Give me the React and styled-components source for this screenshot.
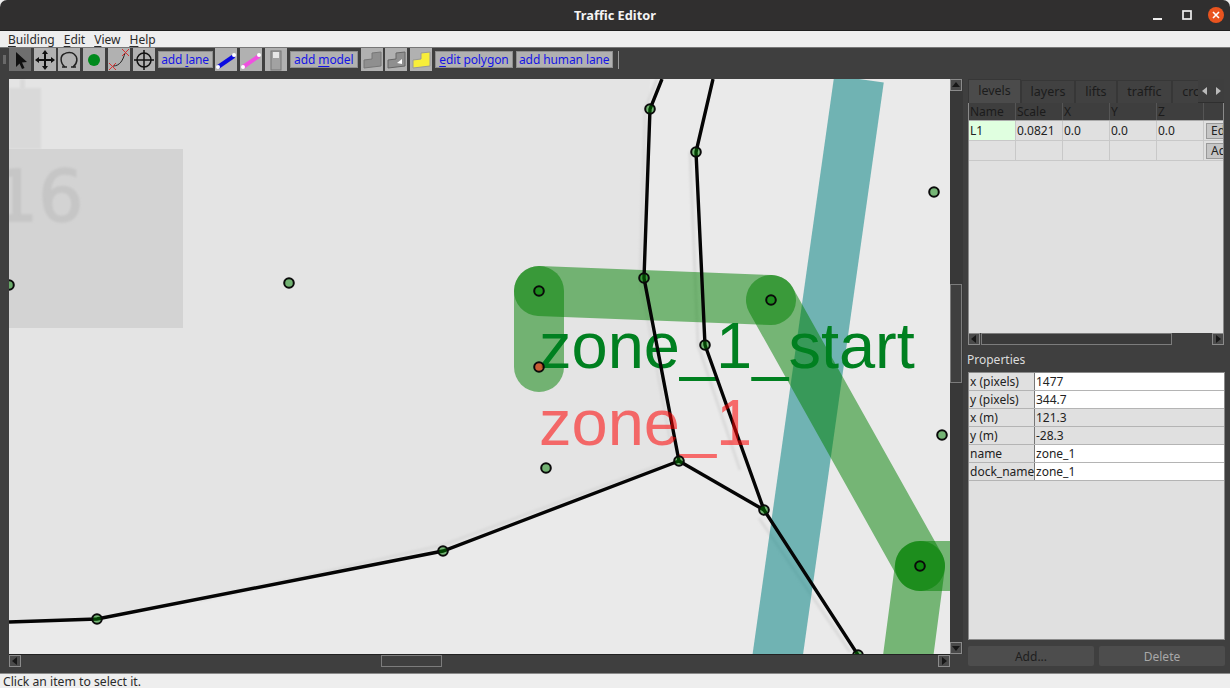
import React from "react";
import styled, { createGlobalStyle } from "styled-components";

const Global = createGlobalStyle`
  html, body { margin: 0; padding: 0; background: #eeeeee; }
  body { width: 1230px; height: 688px; overflow: hidden; font-family: "Noto Sans", "Open Sans", sans-serif; }
  * { box-sizing: border-box; }
`;

const Window = styled.div`
  width: 1230px; height: 688px; display: flex; flex-direction: column; overflow: hidden;
`;
const TitleBar = styled.header`
  height: 31px; flex: none; background: #302f2f; border-bottom: 1px solid #1e1e1e;
  border-radius: 7px 7px 0 0; display: flex; align-items: center; justify-content: center;
  position: relative; color: #f4f4f4; font-size: 12.8px; font-weight: 700;
`;
const WindowButtons = styled.div`
  position: absolute; right: 6px; top: 7px; display: flex; align-items: center; gap: 13px;
`;
const WinIcon = styled.svg`
  width: 16px; height: 16px; display: block;
`;
const MenuBar = styled.nav`
  height: 17px; flex: none; background: #eeeeee; display: flex; align-items: center;
  padding-left: 8px; gap: 9px; font-size: 12px; color: #2a2a2a; border-bottom: 1px solid #777;
`;
const Mnemonic = styled.span`
  text-decoration: underline; text-underline-offset: 2px;
`;
const Toolbar = styled.div`
  height: 31px; flex: none; background: #3f3f3f; display: flex; align-items: flex-start;
  padding: 0 0 0 3px; gap: 2.8px; position: relative;
`;
const Handle = styled.div`
  width: 3px; height: 9px; margin: 7px 0 0 0; background: #6a6a6a; flex: none;
`;
const ToolIcon = styled.button`
  width: 22px; height: 23px; padding: 0; border: 0; border-radius: 0; flex: none;
  background: ${(p) => (p.$active ? "#6f6f6f" : "#b1b1b1")};
  display: flex; align-items: center; justify-content: center;
`;
const ToolText = styled.button`
  height: 17px; margin-top: 3px; padding: 0; border: 1px solid #8f8f8f; border-radius: 0;
  background: #b1b1b1; color: #1414e6; font: 12px "Noto Sans", sans-serif; letter-spacing: -0.1px; line-height: 14px; flex: none;
  width: ${(p) => p.$w}px; white-space: nowrap; text-align: center;
`;
const ToolSep = styled.div`
  width: 1px; height: 18px; margin: 3px 0 0 2px; background: #9a9a9a; flex: none;
`;
const Main = styled.main`
  flex: 1; min-height: 0; background: #3f3f3f; display: flex; padding-left: 9px;
  border-bottom: 1px solid #8a8a8a;
`;
const CanvasGrid = styled.section`
  width: 954px; height: 588px; flex: none; display: grid;
  grid-template-columns: 941px 13px; grid-template-rows: 575px 13px;
`;
const Canvas = styled.svg`
  width: 941px; height: 575px; display: block; background: #e9e9e9;
`;
const VBar = styled.div`
  height: 575px; background: #383838; display: flex; flex-direction: column; justify-content: space-between; position: relative;
`;
const HBar = styled.div`
  width: 941px; background: #3f3f3f; border-top: 1px solid #222; display: flex; justify-content: space-between; position: relative;
`;
const ArrowBtn = styled.div`
  width: 12px; height: 12px; background: #4a4a4a; border: 1px solid #8b8b8b;
  display: flex; align-items: center; justify-content: center; color: #171717; flex: none;
`;
const VThumb = styled.div`
  position: absolute; left: 0; top: 205px; width: 12px; height: 99px; background: #3f3f3f; border: 1px solid #7c7c7c;
`;
const HThumb = styled.div`
  position: absolute; left: 372px; top: 0; width: 61px; height: 12px; background: #3f3f3f; border: 1px solid #7c7c7c;
`;
const Panel = styled.aside`
  width: 257px; margin-left: 5px; flex: none; display: flex; flex-direction: column;
`;
const TabRow = styled.div`
  height: 24px; display: flex; position: relative; overflow: hidden; flex: none; width: 256px;
`;
const Tab = styled.div`
  height: ${(p) => (p.$active ? 24 : 23)}px; margin-top: ${(p) => (p.$active ? 0 : 1)}px;
  width: ${(p) => p.$w}px; flex: none; font-size: 12.5px; color: #1c1c1c; text-align: center; line-height: 22px;
  background: ${(p) => (p.$active ? "#4b4b4b" : "#414141")}; border: 1px solid #373737; border-bottom: 0;
`;
const TabArrows = styled.div`
  position: absolute; right: 0; top: 0; width: 26px; height: 24px; background: #3e3e3e; display: flex;
  align-items: center; justify-content: space-around; color: #bbb; font-size: 8px; border-bottom: 1px solid #2f2f2f;
`;
const TableBox = styled.div`
  width: 256px; height: 230px; background: #e0e0e0; flex: none; overflow: hidden; border-left: 1px solid #8a8a8a; border-right: 1px solid #8a8a8a;
`;
const TableRow = styled.div`
  display: grid; grid-template-columns: 47px 47px 47px 47px 47px 20px; height: ${(p) => p.$h}px;
  ${(p) => (p.$head ? "background:#3e3e3e;border-bottom:1px solid #aaa;" : "")}
`;
const HeadCell = styled.div`
  font-size: 12px; color: #1b1b1b; padding-left: 1px; line-height: 17px; border-right: 1px solid #555; white-space: nowrap;
`;
const Cell = styled.div`
  font-size: 12px; color: #222; padding-left: 1px; line-height: 19px; border-right: 1px solid #c8c8c8; border-bottom: 1px solid #c8c8c8;
  background: ${(p) => (p.$hi ? "#e0ffe0" : "transparent")}; white-space: nowrap;
`;
const CellButton = styled.div`
  width: 30px; height: 16px; margin: 2px 0 0 2px; background: #c6c6c6; border: 1px solid #999; font-size: 12px; color: #222;
  line-height: 14px; padding-left: 4px;
`;
const ButtonCell = styled.div`
  overflow: hidden; border-bottom: 1px solid #c8c8c8;
`;
const PanelHBar = styled.div`
  width: 256px; height: 13px; background: #3f3f3f; display: flex; justify-content: space-between; position: relative; flex: none;
`;
const PanelThumb = styled.div`
  position: absolute; left: 13px; top: 0; width: 191px; height: 12px; background: #3a3a3a; border: 1px solid #7c7c7c;
`;
const PropTitle = styled.div`
  height: 26px; flex: none; font-size: 12px; color: #dcdcdc; line-height: 28px; margin-left: -1px;
`;
const PropBox = styled.div`
  width: 257px; height: 268px; flex: none; background: #e0e0e0; border: 1px solid #8a8a8a;
`;
const PropRow = styled.div`
  display: grid; grid-template-columns: 66px 1fr; height: 18px; border-bottom: 1px solid #b4b4b4;
`;
const PropLabel = styled.div`
  background: #e0e0e0; font-size: 12px; color: #222; line-height: 17px; padding-left: 1px; border-right: 1px solid #777; white-space: nowrap;
`;
const PropValue = styled.div`
  background: ${(p) => (p.$ro ? "#e0e0e0" : "#ffffff")}; font-size: 12px; color: #222; line-height: 17px; padding-left: 1px;
`;
const PropButtons = styled.div`
  display: flex; gap: 5px; margin-top: 6px; width: 257px;
`;
const PanelButton = styled.button`
  flex: 1; height: 20px; padding: 0; border: 0; border-radius: 2px; background: #4d4d4d;
  color: ${(p) => (p.$dim ? "#a8a8a8" : "#1e1e1e")}; font: 12px "Noto Sans", sans-serif;
`;
const StatusBar = styled.footer`
  height: 14px; flex: none; background: #eeeeee; font-size: 12.2px; color: #2a2a2a; padding-left: 3px; line-height: 16px;
  white-space: nowrap; overflow: hidden;
`;

const Tri = ({ d }) => {
  const pts = { u: "1,7 9,7 5,2", d: "1,3 9,3 5,8", l: "7,1 7,9 2,5", r: "3,1 3,9 8,5" }[d];
  return <svg width="10" height="10" viewBox="0 0 10 10"><polygon points={pts} fill="currentColor" /></svg>;
};

const Vertex = ({ x, y, red }) => (
  <circle cx={x} cy={y} r="4.8" fill={red ? "#ff2a10" : "#008000"} fillOpacity={red ? 0.62 : 0.5} stroke="#0a0a0a" strokeWidth="2" />
);

const Ic = styled.svg`
  width: 22px; height: 22px; display: block;
`;

const POLY = "M3 11L11 10L11 4L20 3L20 17L3 19Z";
const greenLanes = ["M539 291L771 300", "M539 291L539 367", "M771 300L920 566", "M920 566L980 566", "M920 566L905 680"];
const freeVerts = [[934,192],[289,283],[9,285],[546,468],[942,435]];
const laneVerts = [[650,109],[696,152],[644,278],[705,345],[679,461],[764,510],[443,551],[97,619],[858,655],[539,291],[771,300],[920,566]];
const propRows = [
  ["x (pixels)", "1477", false], ["y (pixels)", "344.7", false], ["x (m)", "121.3", true],
  ["y (m)", "-28.3", true], ["name", "zone_1", false], ["dock_name", "zone_1", false],
];

export default function App() {
  return (
    <Window>
      <Global />
      <TitleBar>
        Traffic Editor
        <WindowButtons>
          <WinIcon viewBox="0 0 16 16"><rect x="3" y="11" width="9" height="2" fill="#eee" /></WinIcon>
          <WinIcon viewBox="0 0 16 16"><rect x="4" y="4" width="8" height="8" fill="none" stroke="#eee" strokeWidth="1.7" /></WinIcon>
          <WinIcon viewBox="0 0 16 16">
            <circle cx="8" cy="8" r="8" fill="#e9541f" />
            <path d="M5 5l6 6M11 5l-6 6" stroke="#fff" strokeWidth="1.6" />
          </WinIcon>
        </WindowButtons>
      </TitleBar>
      <MenuBar>
        <span><Mnemonic>B</Mnemonic>uilding</span>
        <span><Mnemonic>E</Mnemonic>dit</span>
        <span><Mnemonic>V</Mnemonic>iew</span>
        <span><Mnemonic>H</Mnemonic>elp</span>
      </MenuBar>
      <Toolbar>
        <Handle />
        <ToolIcon $active><Ic viewBox="0 0 22 22"><path d="M7 3L7 18L10.5 14.5L13 20L15.5 19L13 13.5L18 13Z" fill="#111" /></Ic></ToolIcon>
        <ToolIcon><Ic viewBox="0 0 22 22"><path d="M11 1l3 4h-2v5h5V8l4 3-4 3v-2h-5v5h2l-3 4-3-4h2v-5H5v2l-4-3 4-3v2h5V5H8z" fill="#111" /></Ic></ToolIcon>
        <ToolIcon><Ic viewBox="0 0 22 22"><path d="M7 18C2 14 2 7 6 5c3-2 8-2 10 0 4 3 4 9-1 13" fill="none" stroke="#222" strokeWidth="1.5" /><path d="M4 18h5M13 18h5" stroke="#222" strokeWidth="1.5" /></Ic></ToolIcon>
        <ToolIcon><Ic viewBox="0 0 22 22"><circle cx="11" cy="11" r="6" fill="#008a1c" /></Ic></ToolIcon>
        <ToolIcon><Ic viewBox="0 0 22 22"><path d="M5 17C12 17 15 11 17 4" fill="none" stroke="#222" strokeWidth="1" /><path d="M1 14l7 7M8 14l-7 7M14 0l7 7M21 0l-7 7" stroke="#d83030" strokeWidth="1" /></Ic></ToolIcon>
        <ToolIcon><Ic viewBox="0 0 22 22"><circle cx="11" cy="11" r="7" fill="none" stroke="#111" strokeWidth="1.5" /><path d="M11 1v20M1 11h20" stroke="#111" strokeWidth="1.5" /></Ic></ToolIcon>
        <ToolText $w={55}>add <Mnemonic>l</Mnemonic>ane</ToolText>
        <ToolIcon><Ic viewBox="0 0 22 22"><path d="M3 18L19 7" stroke="#0a0ae0" strokeWidth="4" /><circle cx="3" cy="18" r="2" fill="#fff" /><circle cx="19" cy="6" r="2" fill="#fff" /></Ic></ToolIcon>
        <ToolIcon><Ic viewBox="0 0 22 22"><path d="M3 18L19 7" stroke="#f050e0" strokeWidth="4" /><circle cx="3" cy="18" r="2" fill="#fff" /><circle cx="19" cy="6" r="2" fill="#fff" /></Ic></ToolIcon>
        <ToolIcon><Ic viewBox="0 0 22 22"><rect x="6" y="2" width="10" height="19" fill="#a2a2a2" stroke="#777" /><rect x="8" y="3" width="6" height="6" fill="#e8e8e8" /></Ic></ToolIcon>
        <ToolText $w={68}>add <Mnemonic>m</Mnemonic>odel</ToolText>
        <ToolIcon><Ic viewBox="0 0 22 22"><path d={POLY} fill="#8f8f8f" stroke="#777" /></Ic></ToolIcon>
        <ToolIcon><Ic viewBox="0 0 22 22"><path d={POLY} fill="#8f8f8f" stroke="#666" /><path d="M12 14l5-4v5z" fill="#fff" /></Ic></ToolIcon>
        <ToolIcon><Ic viewBox="0 0 22 22"><path d={POLY} fill="#f8ee3a" stroke="#999" /></Ic></ToolIcon>
        <ToolText $w={78}><Mnemonic>e</Mnemonic>dit polygon</ToolText>
        <ToolText $w={97}>add human lane</ToolText>
        <ToolSep />
      </Toolbar>
      <Main>
        <CanvasGrid>
          <Canvas viewBox="9 79 941 575">
            <defs>
              <filter id="soft"><feGaussianBlur stdDeviation="1.2" /></filter>
            </defs>
            <rect x="9" y="79" width="941" height="575" fill="#eaeaea" />
            <polygon points="9,79 650,79 644,278 679,461 443,551 97,619 9,622" fill="#e4e4e4" />
            <rect x="9" y="88" width="32" height="61" fill="#d9d9d9" filter="url(#soft)" />
            <rect x="20" y="79" width="5" height="10" fill="#d9d9d9" filter="url(#soft)" />
            <rect x="9" y="149" width="174" height="179" fill="#d3d3d3" />
            <text x="-7" y="221" fontFamily="DejaVu Sans" fontSize="71" fill="#c6c6c6" stroke="#c6c6c6" strokeWidth="1.5" filter="url(#soft)">16</text>
            <g filter="url(#soft)" fill="none" stroke="#dadada" strokeWidth="3">
              <path d="M657 79L645 109L640 278L670 440" />
              <path d="M690 152L698 345L740 470" />
              <path d="M660 465L443 545L200 600" />
              <path d="M759 518L850 652" />
            </g>
            <path d="M859 79L777 660" stroke="#008080" strokeOpacity="0.52" strokeWidth="50" fill="none" />
            {greenLanes.map((d) => (
              <path key={d} d={d} stroke="#008000" strokeOpacity="0.5" strokeWidth="50" strokeLinecap="round" fill="none" />
            ))}
            <text x="539" y="368" fontFamily="Liberation Sans" fontSize="65" fill="#008020">zone_1_start</text>
            <g fill="none" stroke="#050505" strokeWidth="3.4">
              <path d="M662 79L650 109L644 278L679 461" />
              <path d="M713 79L696 152L705 345L764 510L858 655" />
              <path d="M679 461L443 551L97 619L9 622" />
              <path d="M679 461L764 510" />
            </g>
            <text x="539" y="445" fontFamily="Liberation Sans" fontSize="65" fill="#ff0000" fillOpacity="0.55">zone_1</text>
            {freeVerts.map(([x, y]) => <Vertex key={x} x={x} y={y} />)}
            {laneVerts.map(([x, y]) => <Vertex key={x} x={x} y={y} />)}
            <Vertex x={539} y={367} red />
          </Canvas>
          <VBar>
            <ArrowBtn><Tri d="u" /></ArrowBtn>
            <VThumb />
            <ArrowBtn><Tri d="d" /></ArrowBtn>
          </VBar>
          <HBar>
            <ArrowBtn><Tri d="l" /></ArrowBtn>
            <HThumb />
            <ArrowBtn><Tri d="r" /></ArrowBtn>
          </HBar>
        </CanvasGrid>
        <Panel>
          <TabRow>
            <Tab $active $w={53}>levels</Tab>
            <Tab $w={54}>layers</Tab>
            <Tab $w={42}>lifts</Tab>
            <Tab $w={55}>traffic</Tab>
            <Tab $w={56}>crowd</Tab>
            <TabArrows><Tri d="l" /><Tri d="r" /></TabArrows>
          </TabRow>
          <TableBox>
            <TableRow $head $h={18}>
              <HeadCell>Name</HeadCell><HeadCell>Scale</HeadCell><HeadCell>X</HeadCell><HeadCell>Y</HeadCell><HeadCell>Z</HeadCell><HeadCell />
            </TableRow>
            <TableRow $h={20}>
              <Cell $hi>L1</Cell><Cell>0.0821</Cell><Cell>0.0</Cell><Cell>0.0</Cell><Cell>0.0</Cell>
              <ButtonCell><CellButton>Edit</CellButton></ButtonCell>
            </TableRow>
            <TableRow $h={20}>
              <Cell /><Cell /><Cell /><Cell /><Cell />
              <ButtonCell><CellButton>Add</CellButton></ButtonCell>
            </TableRow>
          </TableBox>
          <PanelHBar>
            <ArrowBtn><Tri d="l" /></ArrowBtn>
            <PanelThumb />
            <ArrowBtn><Tri d="r" /></ArrowBtn>
          </PanelHBar>
          <PropTitle>Properties</PropTitle>
          <PropBox>
            {propRows.map(([k, v, ro]) => (
              <PropRow key={k}><PropLabel>{k}</PropLabel><PropValue $ro={ro}>{v}</PropValue></PropRow>
            ))}
          </PropBox>
          <PropButtons>
            <PanelButton>Add...</PanelButton>
            <PanelButton $dim>Delete</PanelButton>
          </PropButtons>
        </Panel>
      </Main>
      <StatusBar>Click an item to select it.</StatusBar>
    </Window>
  );
}
